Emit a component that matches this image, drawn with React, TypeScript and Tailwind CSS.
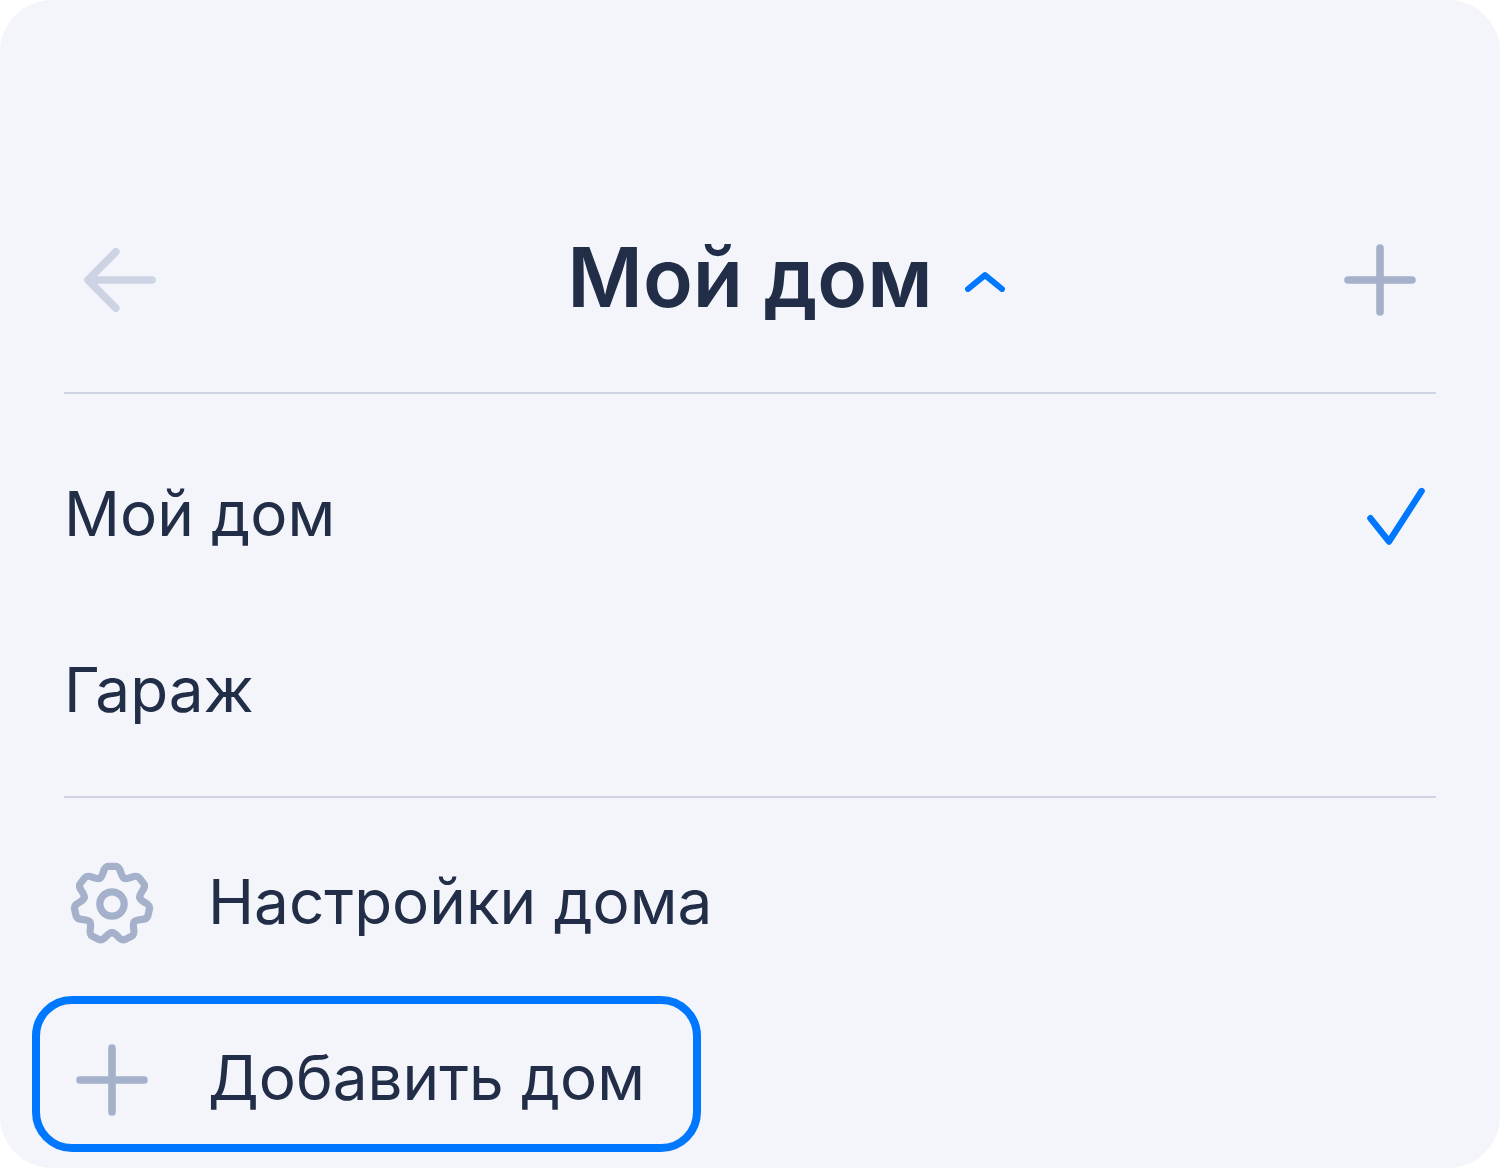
import { useState } from 'react';

const HOMES = ['Мой дом', 'Гараж'];
const GEAR_TEETH = [0, 1, 2, 3, 4, 5, 6];

function BackIcon() {
  return (
    <svg className="size-24 shrink-0" viewBox="0 0 96 96" fill="none" stroke="currentColor" strokeWidth="7.6" strokeLinecap="round" strokeLinejoin="round" aria-hidden="true">
      <path d="M43.8 19.8 16 48l27.8 28.2M16 48h64" />
    </svg>
  );
}

function PlusIcon() {
  return (
    <svg className="size-24 shrink-0" viewBox="0 0 96 96" fill="none" stroke="currentColor" strokeWidth="7.6" strokeLinecap="round" aria-hidden="true">
      <path d="M48 16v64M16 48h64" />
    </svg>
  );
}

function ChevronUpIcon() {
  return (
    <svg className="h-6 w-10 shrink-0" viewBox="0 0 40 24" fill="none" stroke="currentColor" strokeWidth="6" strokeLinecap="round" strokeLinejoin="round" aria-hidden="true">
      <path d="M3 21 20 7.2 37 21" />
    </svg>
  );
}

function CheckIcon() {
  return (
    <svg className="size-24 shrink-0" viewBox="0 0 96 96" fill="none" stroke="currentColor" strokeWidth="6.4" strokeLinecap="round" strokeLinejoin="round" aria-hidden="true">
      <path d="M30.4 50.2 49 73.6 81.6 23" />
    </svg>
  );
}

function GearIcon() {
  return (
    <svg className="size-24 shrink-0" viewBox="-48 -48 96 96" fill="none" stroke="currentColor" strokeWidth="7.2" strokeLinecap="round" strokeLinejoin="round" aria-hidden="true">
      <circle r="12.2" />
      {/* One tooth, repeated around the hub */}
      {GEAR_TEETH.map(i => (
        <path
          key={i}
          transform={`rotate(${(i * 360) / 7})`}
          d="M-12.4-25.7C-10.3-26.7-9.6-29-8.8-31.6C-7.6-35.8-6.4-37.6-3.6-37.6H3.6C6.4-37.6 7.6-35.8 8.8-31.6C9.6-29 10.3-26.7 12.4-25.7"
        />
      ))}
    </svg>
  );
}

export default function App() {
  const [selected, setSelected] = useState('Мой дом');
  const [isOpen, setIsOpen] = useState(true);

  return (
    <main className="rounded-[52px] bg-[#f3f5fa] px-16 pt-42 font-['Inter',sans-serif] text-[62px] leading-[76px] text-[#222e47]">
      {/* Header */}
      <header className="flex h-56 items-center justify-between px-2">
        <button type="button" aria-label="Назад" className="text-[#ccd3e2]">
          <BackIcon />
        </button>
        <h1 className="text-[82px] leading-[100px] font-semibold">
          <button
            type="button"
            aria-expanded={isOpen}
            onClick={() => setIsOpen(!isOpen)}
            className="flex items-center gap-8 pl-18"
          >
            <span className="pb-1">{selected}</span>
            <span className="text-[#0077ff]">
              <ChevronUpIcon />
            </span>
          </button>
        </h1>
        <button type="button" aria-label="Добавить" className="text-[#a5b1ca]">
          <PlusIcon />
        </button>
      </header>

      {isOpen && (
        <>
          {/* Homes */}
          <ul className="border-y-2 border-[#ccd3e2] pt-[34px] pb-4">
            {HOMES.map(home => (
              <li key={home}>
                <button
                  type="button"
                  onClick={() => setSelected(home)}
                  className="flex h-44 w-full items-center justify-between text-left"
                >
                  <span className="pb-1">{home}</span>
                  {home === selected && (
                    <span className="text-[#0077ff]">
                      <CheckIcon />
                    </span>
                  )}
                </button>
              </li>
            ))}
          </ul>

          {/* Actions */}
          <div className="-mx-8 flex flex-col items-start pt-[18px] pb-4">
            <button type="button" className="flex h-44 items-center gap-12 px-8 text-left">
              <span className="text-[#a5b1ca]">
                <GearIcon />
              </span>
              <span className="pb-1">Настройки дома</span>
            </button>
            <button
              type="button"
              className="mt-1 flex items-center gap-12 rounded-[40px] border-8 border-[#0077ff] pt-7 pr-12 pb-4 pl-6 text-left"
            >
              <span className="text-[#a5b1ca]">
                <PlusIcon />
              </span>
              <span className="pb-1">Добавить дом</span>
            </button>
          </div>
        </>
      )}
    </main>
  );
}
